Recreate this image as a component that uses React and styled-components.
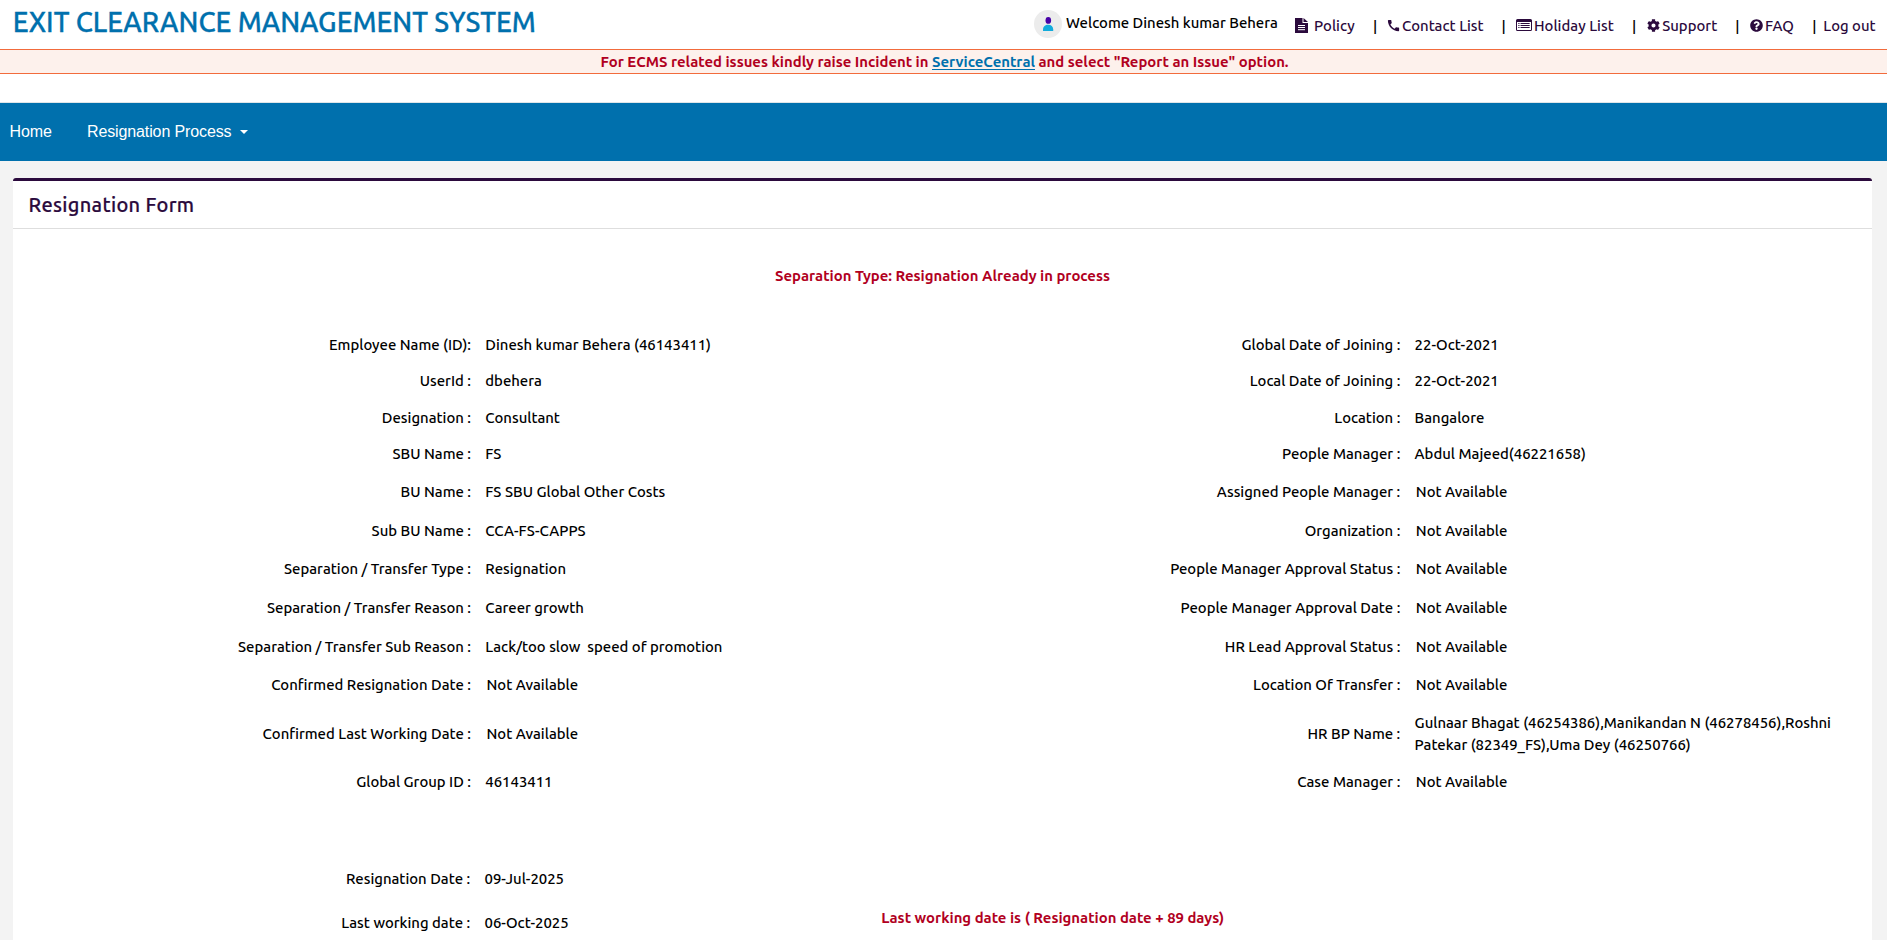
import React from 'react';
import styled, { createGlobalStyle } from 'styled-components';
import { FaCog, FaQuestionCircle } from 'react-icons/fa';
import { MdCall } from 'react-icons/md';

const GlobalStyle = createGlobalStyle`
  *, *::before, *::after { box-sizing: border-box; }
  body {
    margin: 0;
    background: #f3f3f3;
    color: #000;
    font: 500 14.9px/22px Ubuntu, "Noto Sans", sans-serif;
  }
`;

const Page = styled.div`
  display: flex;
  flex-direction: column;
  height: 940px;
  overflow: hidden;
  > * { flex-shrink: 0; }
`;

const Text = styled.span`
  letter-spacing: ${(p) => p.$track || 0}px;
  white-space: nowrap;
`;

const TopBar = styled.header`
  display: flex;
  justify-content: space-between;
  height: 49px;
  padding-left: 12.7px;
  background: #fff;
`;

const Title = styled.h1`
  margin: 4px 0 0;
  color: #0070ad;
  font-size: 27.4px;
  font-weight: 500;
  line-height: 35px;
  white-space: nowrap;
  -webkit-text-stroke: 0.3px;
`;

const Links = styled.nav`
  display: grid;
  grid-template-columns: 261px 76px 128.5px 130.5px 103.3px 77px 76.7px;
`;

const Welcome = styled.div`
  display: flex;
  align-items: flex-start;
  gap: 4px;
  padding-top: 10px;
`;

const WelcomeText = styled.span`
  margin-top: 2px;
  white-space: nowrap;
`;

const AvatarSvg = styled.svg`
  flex: none;
  width: 28px;
  height: 28px;
`;

const TopLink = styled.a`
  display: flex;
  align-items: center;
  gap: ${(p) => p.$gap ?? 2}px;
  height: 22px;
  margin-top: 15px;
  color: #2b0a3d;
  svg {
    flex: none;
    margin-top: -2px;
  }
`;

const Divider = styled.span`
  width: 8px;
  margin-right: ${(p) => p.$after ?? 6.4}px;
  color: #000;
  text-align: center;
`;

const Notice = styled.div`
  height: 25px;
  padding: 1px 0 0 2px;
  border: solid #f26b3c;
  border-width: 1px 0;
  background: #fdf1ec;
  color: #b1001e;
  font-weight: 700;
  line-height: 22px;
  text-align: center;
`;

const NoticeLink = styled.a`
  color: #0070ad;
  text-decoration: underline;
  text-underline-offset: 2px;
`;

const Spacer = styled.div`
  height: 29px;
  border-bottom: 1px solid #dfe5e8;
  background: #fff;
`;

const MainNav = styled.nav`
  display: flex;
  align-items: center;
  height: 58px;
  padding: 0 0 1px 9.5px;
  background: #0070ad;
  color: #fff;
  font: 400 16px/24px "Liberation Sans", sans-serif;
`;

const NavItem = styled.a`
  display: flex;
  align-items: center;
  gap: 8.5px;
  width: ${(p) => p.$width}px;
  letter-spacing: -0.12px;
  white-space: nowrap;
`;

const Caret = styled.i`
  border: solid transparent;
  border-width: 4px 4px 0;
  border-top-color: #fff;
`;

const Card = styled.main`
  flex: 1;
  margin: 17px 15px 0 13px;
  border-top: 3px solid #2b0a3d;
  border-radius: 3px 3px 0 0;
  background: #fff;
`;

const CardHeader = styled.h2`
  margin: 0;
  height: 48px;
  padding: 11px 15.5px 0;
  border-bottom: 1px solid #dedede;
  color: #2b0a3d;
  font-size: 20px;
  font-weight: 500;
  line-height: 26px;
  letter-spacing: 0.32px;
  -webkit-text-stroke: 0.2px;
`;

const Status = styled.p`
  margin: 36px 0 0;
  height: 62px;
  color: #b1001e;
  font-weight: 700;
  text-align: center;
`;

const Details = styled.dl`
  display: grid;
  grid-template-columns: 458px 471.5px 457.8px 1fr;
  grid-template-rows: 36px 36px 38px 34px 42px 36px 40px 38px 40px 36px 62px 34px;
  align-items: center;
  margin: 0;
`;

const DateRows = styled.dl`
  display: grid;
  grid-template-columns: 457.2px 411px 1fr;
  grid-auto-rows: 44px;
  align-items: center;
  margin: 58px 0 0;
`;

const Label = styled.dt`
  text-align: right;
  white-space: nowrap;
`;

const Value = styled.dd`
  display: flex;
  flex-direction: column;
  margin: 0;
  padding-left: ${(p) => (p.$inset ? 15.5 : 14.3)}px;
  white-space: pre;
`;

const DateNote = styled.span`
  padding-bottom: 10px;
  color: #b1001e;
  font-weight: 700;
  white-space: nowrap;
`;

const NA = 'Not Available';

const rows = [
  ['Employee Name (ID):', 'Dinesh kumar Behera (46143411)', 'Global Date of Joining :', '22-Oct-2021'],
  ['UserId :', 'dbehera', 'Local Date of Joining :', '22-Oct-2021'],
  ['Designation :', 'Consultant', 'Location :', 'Bangalore'],
  ['SBU Name :', 'FS', 'People Manager :', 'Abdul Majeed(46221658)'],
  ['BU Name :', 'FS SBU Global Other Costs', 'Assigned People Manager :', NA],
  ['Sub BU Name :', 'CCA-FS-CAPPS', 'Organization :', NA],
  ['Separation / Transfer Type :', 'Resignation', 'People Manager Approval Status :', NA],
  ['Separation / Transfer Reason :', 'Career growth', 'People Manager Approval Date :', NA],
  ['Separation / Transfer Sub Reason :', 'Lack/too slow  speed of promotion', 'HR Lead Approval Status :', NA],
  ['Confirmed Resignation Date :', NA, 'Location Of Transfer :', NA],
  [
    'Confirmed Last Working Date :',
    NA,
    'HR BP Name :',
    'Gulnaar Bhagat (46254386),Manikandan N (46278456),Roshni\nPatekar (82349_FS),Uma Dey (46250766)',
  ],
  ['Global Group ID :', '46143411', 'Case Manager :', NA],
];

function Avatar() {
  return (
    <AvatarSvg viewBox="0 0 28 28">
      <circle cx="14" cy="14" r="14" fill="#ececec" />
      <ellipse cx="14.3" cy="10.4" rx="2.8" ry="3.4" fill="#4701a7" />
      <path d="M9 21v-1.5c0-3 2.2-4.7 5.2-4.7s5 1.7 5 4.7V21z" fill="#12abdb" />
    </AvatarSvg>
  );
}

function DocumentIcon() {
  return (
    <svg width="13" height="15" viewBox="0 0 13 15">
      <path d="M0 0h7.5v5H13v10H0z M8.5 0L13 4H8.5z" fill="#2b0a3d" />
      <path d="M3 7.5h7M3 9.5h7M3 11.7h7" stroke="#fff" strokeWidth="1" />
    </svg>
  );
}

function ListIcon() {
  return (
    <svg width="16" height="12" viewBox="0 0 16 12">
      <path
        d="M1.5 0h13Q16 0 16 1.5v9Q16 12 14.5 12h-13Q0 12 0 10.5v-9Q0 0 1.5 0zM1 3v7.5q0 .5.5.5h13q.5 0 .5-.5V3z"
        fill="#2b0a3d"
        fillRule="evenodd"
      />
      <path d="M2.3 4.5h1.2M2.3 6.5h1.2M2.3 8.5h1.2M4.5 4.5h9.2M4.5 6.5h9.2M4.5 8.5h9.2" stroke="#2b0a3d" strokeWidth="1" />
    </svg>
  );
}

export default function App() {
  return (
    <Page>
      <GlobalStyle />
      <TopBar>
        <Title>EXIT CLEARANCE MANAGEMENT SYSTEM</Title>
        <Links>
          <Welcome>
            <Avatar />
            <WelcomeText>Welcome Dinesh kumar Behera</WelcomeText>
          </Welcome>
          <TopLink $gap={6}>
            <DocumentIcon />
            <Text $track={0.05}>Policy</Text>
          </TopLink>
          <TopLink $gap={0.8}>
            <Divider>|</Divider>
            <MdCall size={15} />
            <Text>Contact List</Text>
          </TopLink>
          <TopLink>
            <Divider>|</Divider>
            <ListIcon />
            <Text $track={0.05}>Holiday List</Text>
          </TopLink>
          <TopLink $gap={2.4}>
            <Divider>|</Divider>
            <FaCog size={13} />
            <Text>Support</Text>
          </TopLink>
          <TopLink $gap={2.4}>
            <Divider $after={6}>|</Divider>
            <FaQuestionCircle size={13} />
            <Text>FAQ</Text>
          </TopLink>
          <TopLink>
            <Divider $after={3}>|</Divider>
            <Text>Log out</Text>
          </TopLink>
        </Links>
      </TopBar>
      <Notice>
        For ECMS related issues kindly raise Incident in <NoticeLink>ServiceCentral</NoticeLink> and select "Report an
        Issue" option.
      </Notice>
      <Spacer />
      <MainNav>
        <NavItem $width={77.5}>Home</NavItem>
        <NavItem>
          Resignation Process
          <Caret />
        </NavItem>
      </MainNav>
      <Card>
        <CardHeader>Resignation Form</CardHeader>
        <Status>Separation Type: Resignation Already in process</Status>
        <Details>
          {rows.map(([label, value, secondLabel, secondValue]) => (
            <React.Fragment key={label}>
              <Label>{label}</Label>
              <Value $inset={value === NA}>{value}</Value>
              <Label>{secondLabel}</Label>
              <Value $inset={secondValue === NA}>{secondValue}</Value>
            </React.Fragment>
          ))}
        </Details>
        <DateRows>
          <Label>Resignation Date :</Label>
          <Value>09-Jul-2025</Value>
          <span />
          <Label>Last working date :</Label>
          <Value>06-Oct-2025</Value>
          <DateNote>Last working date is ( Resignation date + 89 days)</DateNote>
        </DateRows>
      </Card>
    </Page>
  );
}
